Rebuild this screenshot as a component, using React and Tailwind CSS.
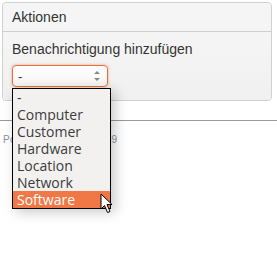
import React from 'react';

const options = ['-', 'Computer', 'Customer', 'Hardware', 'Location', 'Network', 'Software'];

const Cursor = () => (
  <svg className="absolute left-[100px] top-[193px]" width="14" height="21" viewBox="0 0 14 21">
    <path d="M1 1 L1 16 L4.5 12.5 L7.5 19.5 L10 18.5 L7 11.5 L12 11.5 Z" fill="#fff" stroke="#000" strokeWidth="1" strokeLinejoin="round" />
  </svg>
);

export default function App() {
  return (
    <div className="relative h-[256px] w-[277px] overflow-hidden bg-white font-['Liberation_Sans',Arial,sans-serif]">
      <div className="pl-[2px] pt-[2px]">
        <div className="w-[270px] overflow-hidden rounded-[4px] border border-[#d0d0d0] bg-[#f5f5f5]">
          <div className="flex h-[29px] items-center border-b border-[#cfcfcf] bg-[#f5f5f5] pl-[9px] text-[14px] text-[#333]">
            Aktionen
          </div>
          <div className="flex h-[68px] flex-col bg-gradient-to-b from-[#f5f5f5] to-[#f0f0f0] pl-[9px] pt-[9px]">
            <div className="text-[14px] leading-[16px] text-[#333]">Benachrichtigung hinzufügen</div>
            <div className="mt-[8px] flex h-[22px] w-[96px] items-center justify-between rounded-[4px] border border-[#e7703c] bg-gradient-to-b from-white to-[#f4f4f4] pl-[5px] pr-[7px] shadow-[0_0_3px_rgba(233,112,60,0.6)]">
              <span className="text-[13px] leading-none text-[#333]">-</span>
              <svg width="6" height="12" viewBox="0 0 6 12">
                <path d="M0 4 L3 1 L6 4 Z" fill="#888" />
                <path d="M0 8 L3 11 L6 8 Z" fill="#888" />
              </svg>
            </div>
          </div>
        </div>
      </div>
      <div className="mt-[19px] h-px w-full bg-[#9a9a9a]" />
      <div className="pl-[3px] pt-[11px] text-[10px] tracking-[0.3px] text-[#8a93a6]">Powered by OTRS 2009</div>

      <div className="absolute left-[12px] top-[88px] w-[99px] border border-black bg-[#f2f1f0] font-['Open_Sans',sans-serif] shadow-[4px_3px_12px_rgba(0,0,0,0.22)]">
        {options.map((o) => (
          <div
            key={o}
            className={
              'flex h-[17px] items-center pl-[4px] text-[14px] leading-none ' +
              (o === 'Software' ? 'bg-[#f07746] text-white' : 'text-[#3c3c3c]')
            }
          >
            {o}
          </div>
        ))}
      </div>
      <Cursor />
    </div>
  );
}
